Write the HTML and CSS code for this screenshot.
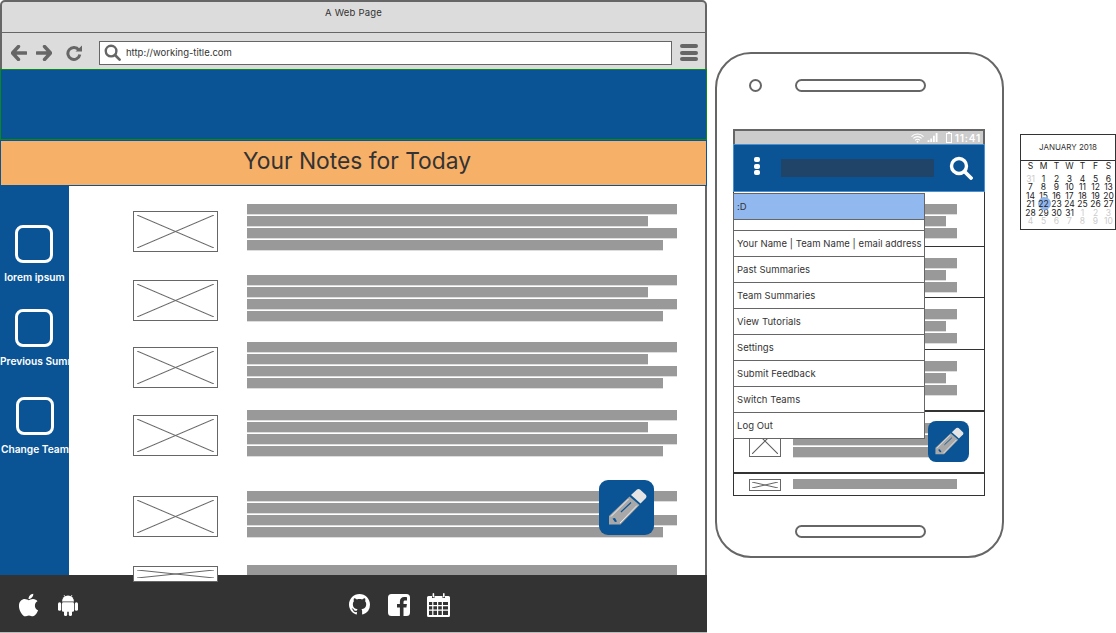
FILE: index.html
```html
<!DOCTYPE html>
<html lang="en">
<head>
    <meta charset="UTF-8">
    <meta name="viewport" content="width=device-width, initial-scale=1.0">
    <title>A Web Page</title>
    <link rel="stylesheet" href="styles.css">
</head>
<body>
    <svg class="defs" width="0" height="0">
        <symbol id="pencil" viewBox="0 0 55 55">
            <path d="M32 15 L38 9.5 Q39.5 8.5 41 9.5 L47 15 Q48 16.5 47 18 L41.5 23.5 Z" fill="#e4e4e4"/>
            <path d="M30.5 16.5 L40.5 25 L21.5 44.5 L10 44.5 L10 36 Z" fill="#a8a8a8"/>
            <path d="M29.5 19 L12 36.5 M38 25.5 L21 43" stroke="#eee" stroke-width="1" fill="none"/>
            <path d="M22 32 L32 22.5" stroke="#0a5495" stroke-width="1.2"/>
            <path d="M13.5 38.5 L16 38 L18 41.5 L16 42 Z" fill="#0a5495"/>
        </symbol>
        <symbol id="lens" viewBox="0 0 24 24">
            <circle cx="10" cy="10" r="7.5" fill="none" stroke="currentColor" stroke-width="3.4"/>
            <path d="M15.5 15.5 L22 22" stroke="currentColor" stroke-width="3.8" stroke-linecap="round"/>
        </symbol>
    </svg>

    <div class="browser">
        <div class="title-bar">A Web Page</div>
        <div class="toolbar">
            <svg class="nav-icon" viewBox="0 0 16 16"><path d="M7.5 1.5 L1.5 8 L7.5 14.5 M2 8 H15" fill="none" stroke="#666" stroke-width="3.4" stroke-linejoin="round" stroke-linecap="round"/></svg>
            <svg class="nav-icon" viewBox="0 0 16 16"><path d="M8.5 1.5 L14.5 8 L8.5 14.5 M14 8 H1" fill="none" stroke="#666" stroke-width="3.4" stroke-linejoin="round" stroke-linecap="round"/></svg>
            <svg class="nav-icon reload" viewBox="0 0 16 16"><path d="M12.8 5 A6 6 0 1 0 13.8 9.5" fill="none" stroke="#666" stroke-width="3"/><path d="M9.5 6.5 H16 V0.5 Z" fill="#666"/></svg>
            <div class="address">
                <svg class="address-lens"><use href="#lens"/></svg>
                <span>http://working-title.com</span>
            </div>
            <div class="burger"><i></i><i></i><i></i></div>
        </div>
        <div class="app-header"></div>
        <h1 class="page-title">Your Notes for Today</h1>
        <div class="page-body">
            <nav class="sidebar">
                <div class="side-item"><div class="side-icon"></div><span>lorem ipsum</span></div>
                <div class="side-item"><div class="side-icon"></div><span>Previous Summaries</span></div>
                <div class="side-item"><div class="side-icon"></div><span>Change Team</span></div>
            </nav>
            <main class="notes">
                <div class="note">
                    <div class="placeholder"></div>
                    <div class="lines"><div class="line"></div><div class="line w2"></div><div class="line"></div><div class="line w4"></div></div>
                </div>
                <div class="note">
                    <div class="placeholder"></div>
                    <div class="lines"><div class="line"></div><div class="line w2"></div><div class="line"></div><div class="line w4"></div></div>
                </div>
                <div class="note">
                    <div class="placeholder"></div>
                    <div class="lines"><div class="line"></div><div class="line w2"></div><div class="line"></div><div class="line w4"></div></div>
                </div>
                <div class="note">
                    <div class="placeholder"></div>
                    <div class="lines"><div class="line"></div><div class="line w2"></div><div class="line"></div><div class="line w4"></div></div>
                </div>
                <div class="note">
                    <div class="placeholder"></div>
                    <div class="lines"><div class="line"></div><div class="line w2"></div><div class="line"></div><div class="line w4"></div></div>
                </div>
                <div class="note">
                    <div class="placeholder squashed"></div>
                    <div class="lines"><div class="line"></div></div>
                </div>
                <button class="fab"><svg><use href="#pencil"/></svg></button>
            </main>
        </div>
        <footer class="page-footer">
            <svg class="foot-icon apple" viewBox="0 0 384 512"><path d="M318.7 268.7c-.2-36.7 16.4-64.4 50-84.8-18.8-26.9-47.2-41.7-84.7-44.6-35.5-2.8-74.3 20.7-88.5 20.7-15 0-49.4-19.7-76.4-19.7C63.3 141.2 4 184.8 4 273.5q0 39.3 14.4 81.2c12.8 36.7 59 126.7 107.2 125.2 25.2-.6 43-17.9 75.8-17.9 31.8 0 48.3 17.9 76.4 17.9 48.6-.7 90.4-82.5 102.6-119.3-65.2-30.7-61.7-90-61.7-91.9zm-56.6-164.2c27.3-32.4 24.8-61.9 24-72.5-24.1 1.4-52 16.4-67.9 34.9-17.5 19.8-27.8 44.3-25.6 71.9 26.1 2 49.9-11.4 69.5-34.3z"/></svg>
            <svg class="foot-icon android" viewBox="0 0 20 22">
                <path d="M4 7.5 A6 6 0 0 1 16 7.5 Z"/>
                <path d="M6 1 L7.5 3.5 M14 1 L12.5 3.5" stroke="#fff" stroke-width=".8"/>
                <rect x="4" y="8.3" width="12" height="9.5" rx="1.2"/>
                <rect x="0" y="8.3" width="3.2" height="8.5" rx="1.6"/>
                <rect x="16.8" y="8.3" width="3.2" height="8.5" rx="1.6"/>
                <rect x="6" y="16" width="3.2" height="6" rx="1.6"/>
                <rect x="10.8" y="16" width="3.2" height="6" rx="1.6"/>
            </svg>
            <svg class="foot-icon github" viewBox="0 0 16 16"><path d="M8 0C3.58 0 0 3.58 0 8c0 3.54 2.29 6.53 5.47 7.59.4.07.55-.17.55-.38 0-.19-.01-.82-.01-1.49-2.01.37-2.53-.49-2.69-.94-.09-.23-.48-.94-.82-1.13-.28-.15-.68-.52-.01-.53.63-.01 1.08.58 1.23.82.72 1.21 1.87.87 2.33.66.07-.52.28-.87.51-1.07-1.78-.2-3.64-.89-3.64-3.95 0-.87.31-1.59.82-2.15-.08-.2-.36-1.02.08-2.12 0 0 .67-.21 2.2.82.64-.18 1.32-.27 2-.27.68 0 1.36.09 2 .27 1.53-1.04 2.2-.82 2.2-.82.44 1.1.16 1.92.08 2.12.51.56.82 1.27.82 2.15 0 3.07-1.87 3.75-3.65 3.95.29.25.54.73.54 1.48 0 1.07-.01 1.93-.01 2.2 0 .21.15.46.55.38A8.013 8.013 0 0016 8c0-4.42-3.58-8-8-8z"/></svg>
            <svg class="foot-icon facebook" viewBox="0 0 22 22"><path d="M3.5 0 H18.5 A3.5 3.5 0 0 1 22 3.5 V18.5 A3.5 3.5 0 0 1 18.5 22 H15.5 V13.5 H18.4 L18.9 10 H15.5 V8 C15.5 7 16 6.4 17.2 6.4 H19 V3.3 C18.3 3.2 17.3 3.1 16.3 3.1 C13.6 3.1 11.9 4.8 11.9 7.6 V10 H9 V13.5 H11.9 V22 H3.5 A3.5 3.5 0 0 1 0 18.5 V3.5 A3.5 3.5 0 0 1 3.5 0 Z"/></svg>
            <svg class="foot-icon planner" viewBox="0 0 23 24">
                <path fill-rule="evenodd" d="M1.5 3 H5 V5 H7.5 V3 H15.5 V5 H18 V3 H21.5 A1.5 1.5 0 0 1 23 4.5 V22.5 A1.5 1.5 0 0 1 21.5 24 H1.5 A1.5 1.5 0 0 1 0 22.5 V4.5 A1.5 1.5 0 0 1 1.5 3 Z M2 9 V12 H5.2 V9 Z M6.4 9 V12 H10 V9 Z M11.2 9 V12 H14.8 V9 Z M16 9 V12 H21 V9 Z M2 13.2 V16.6 H5.2 V13.2 Z M6.4 13.2 V16.6 H10 V13.2 Z M11.2 13.2 V16.6 H14.8 V13.2 Z M16 13.2 V16.6 H21 V13.2 Z M2 17.8 V22 H5.2 V17.8 Z M6.4 17.8 V22 H10 V17.8 Z M11.2 17.8 V22 H14.8 V17.8 Z M16 17.8 V22 H21 V17.8 Z"/>
                <rect x="5.6" y="0" width="1.6" height="4.4" rx=".8"/>
                <rect x="16" y="0" width="1.6" height="4.4" rx=".8"/>
            </svg>
        </footer>
    </div>

    <div class="phone">
        <div class="phone-top">
            <div class="camera"></div>
            <div class="speaker"></div>
        </div>
        <div class="screen">
            <div class="status-bar">
                <svg class="wifi" viewBox="0 0 14 10"><path d="M0.5 3.5 A9 9 0 0 1 13.5 3.5 M2.5 5.5 A6.2 6.2 0 0 1 11.5 5.5 M4.5 7.5 A3.4 3.4 0 0 1 9.5 7.5" fill="none" stroke="#fff" stroke-width="1.2"/><circle cx="7" cy="9" r="1" fill="#fff"/></svg>
                <svg class="signal" viewBox="0 0 12 10"><path d="M0 8 h2 v2 h-2 Z M3 6 h2 v4 h-2 Z M6 3 h2 v7 h-2 Z M9 0 h2 v10 h-2 Z" fill="#fff"/></svg>
                <svg class="battery" viewBox="0 0 6 11"><path d="M2 0 h2 v1 h2 v10 h-6 v-10 h2 Z M1 2 v8 h4 v-8 Z" fill="#fff"/></svg>
                <span>11:41</span>
            </div>
            <div class="app-bar">
                <div class="dots"><i></i><i></i><i></i></div>
                <div class="search-box"></div>
                <svg class="app-lens"><use href="#lens"/></svg>
            </div>
            <div class="list">
                <div class="list-row"><div class="placeholder"></div><div class="lines"><div class="line"></div><div class="line short"></div><div class="line"></div></div></div>
                <div class="list-row"><div class="placeholder"></div><div class="lines"><div class="line"></div><div class="line short"></div><div class="line"></div></div></div>
                <div class="list-row"><div class="placeholder"></div><div class="lines"><div class="line"></div><div class="line short"></div><div class="line"></div></div></div>
                <div class="list-row"><div class="placeholder"></div><div class="lines"><div class="line"></div><div class="line short"></div><div class="line"></div></div></div>
                <div class="list-row"><div class="placeholder"></div><div class="lines"><div class="line"></div><div class="line short"></div><div class="line"></div></div></div>
                <div class="list-row"><div class="placeholder"></div><div class="lines"><div class="line"></div></div></div>
            </div>
            <ul class="menu">
                <li class="menu-head">:D</li>
                <li class="menu-gap"></li>
                <li>Your Name | Team Name | email address</li>
                <li>Past Summaries</li>
                <li>Team Summaries</li>
                <li>View Tutorials</li>
                <li>Settings</li>
                <li>Submit Feedback</li>
                <li>Switch Teams</li>
                <li>Log Out</li>
            </ul>
            <button class="fab small"><svg><use href="#pencil"/></svg></button>
        </div>
        <div class="speaker bottom"></div>
    </div>

    <div class="calendar">
        <div class="cal-title">JANUARY 2018</div>
        <div class="cal-grid">
            <b>S</b><b>M</b><b>T</b><b>W</b><b>T</b><b>F</b><b>S</b>
            <span class="off">31</span><span>1</span><span>2</span><span>3</span><span>4</span><span>5</span><span>6</span>
            <span>7</span><span>8</span><span>9</span><span>10</span><span>11</span><span>12</span><span>13</span>
            <span>14</span><span>15</span><span>16</span><span>17</span><span>18</span><span>19</span><span>20</span>
            <span>21</span><span class="today">22</span><span>23</span><span>24</span><span>25</span><span>26</span><span>27</span>
            <span>28</span><span>29</span><span>30</span><span>31</span><span class="off">1</span><span class="off">2</span><span class="off">3</span>
            <span class="off">4</span><span class="off">5</span><span class="off">6</span><span class="off">7</span><span class="off">8</span><span class="off">9</span><span class="off">10</span>
        </div>
    </div>
</body>
</html>
```

FILE: styles.css
```css
body {
    margin: 0;
    width: 1116px;
    height: 633px;
    overflow: hidden;
    display: flex;
    align-items: flex-start;
    background: #fff;
    color: #333;
    font-family: "Inter", "Liberation Sans", sans-serif;
}

.defs {
    position: absolute;
}

/* browser window */
.browser {
    width: 707px;
    height: 633px;
    flex: none;
    display: flex;
    flex-direction: column;
}

.title-bar {
    height: 30px;
    background: #dcdcdc;
    border: 2px solid #666;
    border-bottom: 1px solid #666;
    border-radius: 5px 5px 0 0;
    text-align: center;
    font-size: 9.5px;
    line-height: 22px;
    letter-spacing: 0.2px;
}

.toolbar {
    height: 33px;
    padding: 3px 0 0 9px;
    background: #dcdcdc;
    border: solid #666;
    border-width: 0 2px;
    display: flex;
    align-items: center;
}

.nav-icon {
    width: 16px;
    height: 16px;
    margin-right: 9px;
}

.nav-icon.reload {
    margin-left: 5px;
    margin-right: 17px;
}

.address {
    width: 571px;
    height: 22px;
    border: 1px solid #666;
    background: #fff;
    display: flex;
    align-items: center;
    font-size: 9.5px;
}

.address-lens {
    width: 17px;
    height: 17px;
    margin: 0 5px 0 4px;
    color: #666;
}

.burger {
    margin-left: 8px;
    display: flex;
    flex-direction: column;
    gap: 2.5px;
}

.burger i {
    display: block;
    width: 18px;
    height: 4px;
    border-radius: 2px;
    background: #666;
}

.app-header {
    height: 69px;
    background: #0a5495;
    border: 1px solid #0b8a1c;
}

.page-title {
    margin: 0;
    height: 44px;
    padding-left: 7px;
    background: #f7b068;
    border: 1px solid #0a5495;
    text-align: center;
    font-size: 22.8px;
    font-weight: 400;
    line-height: 40px;
    color: #333;
}

.page-body {
    flex: 1;
    min-height: 0;
    display: flex;
}

.sidebar {
    width: 69px;
    flex: none;
    background: #0a5495;
    overflow: hidden;
    padding-top: 39px;
    box-sizing: border-box;
    color: #fff;
    font-size: 10.2px;
    font-weight: 600;
}

.side-item {
    height: 84px;
    white-space: nowrap;
}

.side-item:last-child {
    margin-top: 4px;
}

.side-item span {
    display: block;
    margin-top: 8px;
    line-height: 12px;
    text-align: center;
}

.side-item:nth-child(2) span,
.side-item:nth-child(3) span {
    text-align: left;
}

.side-item:last-child span {
    margin-left: 1px;
}

.side-icon {
    width: 32px;
    height: 32px;
    margin-left: 15px;
    border: 3px solid #fff;
    border-radius: 8px;
}

.side-item:last-child .side-icon {
    margin-left: 16px;
}

.notes {
    flex: 1;
    position: relative;
    background: #fff;
    border-right: 2px solid #666;
    padding: 18px 0 0 64px;
}

.note {
    display: flex;
}

.note:nth-child(1) {
    margin-bottom: 23px;
}

.note:nth-child(2) {
    margin-bottom: 20px;
}

.note:nth-child(3) {
    margin-bottom: 21px;
}

.note:nth-child(4) {
    margin-bottom: 34px;
}

.note:nth-child(5) {
    margin-bottom: 27px;
}

.placeholder {
    width: 77px;
    height: 33px;
    padding: 3px;
    margin-top: 5px;
    flex: none;
    border: 1px solid #666;
    background-color: #fff;
    background-image:
        linear-gradient(to top right, transparent calc(50% - 1px), #666 50%, transparent calc(50% + 1px)),
        linear-gradient(to bottom right, transparent calc(50% - 1px), #666 50%, transparent calc(50% + 1px));
    background-origin: content-box;
    background-repeat: no-repeat;
}

.note:first-child .placeholder {
    margin-top: 7px;
}

.placeholder.squashed {
    height: 8px;
    margin-top: 1px;
    position: relative;
    z-index: 2;
}

.lines {
    margin-left: 29px;
    width: 430px;
    display: flex;
    flex-direction: column;
    gap: 1px;
}

.line {
    height: 10px;
    background: #999;
    border-bottom: 1px solid #ddd;
}

.line.w2 {
    width: 401px;
}

.line.w4 {
    width: 416px;
}

.note:last-of-type .line {
    border-bottom: 0;
}

.fab {
    position: absolute;
    right: 51px;
    top: 294px;
    width: 55px;
    height: 55px;
    padding: 0;
    border: 0;
    border-radius: 9px;
    background: #0a5495;
}

.fab svg {
    display: block;
    width: 100%;
    height: 100%;
}

.page-footer {
    height: 58px;
    padding-top: 2px;
    box-sizing: border-box;
    flex: none;
    background: #333;
    border-bottom: 1px solid #bbb;
    display: flex;
    align-items: center;
    position: relative;
}

.foot-icon {
    fill: #fff;
    flex: none;
}

.apple {
    width: 21px;
    height: 26px;
    margin-left: 18px;
}

.android {
    width: 20px;
    height: 22px;
    margin-left: 19px;
}

.github {
    width: 21px;
    height: 21px;
    margin-left: 271px;
}

.facebook {
    width: 22px;
    height: 22px;
    margin-left: 18px;
}

.planner {
    width: 23px;
    height: 24px;
    margin-left: 17px;
}

/* phone */
.phone {
    width: 285px;
    height: 502px;
    flex: none;
    margin: 52px 0 0 8px;
    border: 2px solid #666;
    border-radius: 36px;
    background: #fff;
}

.phone-top {
    display: flex;
    align-items: center;
    padding: 25px 0 0 32px;
}

.camera {
    width: 9px;
    height: 9px;
    border: 2px solid #666;
    border-radius: 50%;
}

.speaker {
    width: 127px;
    height: 9px;
    margin-left: 33px;
    border: 2px solid #666;
    border-radius: 7px;
}

.speaker.bottom {
    margin: 29px 0 0 78px;
}

.screen {
    width: 252px;
    margin: 37px 0 0 16px;
    position: relative;
    border-top: 2px solid #666;
}

.status-bar {
    height: 13px;
    background: #ccc;
    border: solid #666;
    border-width: 0 2px;
    display: flex;
    align-items: center;
    justify-content: flex-end;
    gap: 3px;
    padding-right: 2px;
    color: #fff;
    font-size: 10px;
    font-weight: 600;
    letter-spacing: 0.8px;
}

.wifi {
    width: 13px;
    height: 10px;
}

.signal {
    width: 12px;
    height: 9px;
    margin-right: 4px;
}

.battery {
    width: 6px;
    height: 11px;
}

.app-bar {
    height: 46px;
    background: #0a5495;
    border: 1px solid #4a8fd0;
    display: flex;
    align-items: center;
}

.dots {
    margin-left: 20px;
    display: flex;
    flex-direction: column;
    gap: 1.5px;
    margin-top: -4px;
}

.dots i {
    display: block;
    width: 6px;
    height: 5px;
    border-radius: 2px;
    background: #fff;
}

.search-box {
    width: 153px;
    height: 18px;
    margin-left: 21px;
    background: #1f4468;
}

.app-lens {
    width: 24px;
    height: 24px;
    margin-left: 15px;
    color: #fff;
}

.list {
    width: 250px;
    border: 1px solid #333;
    border-top: 0;
}

.list-row {
    height: 54px;
    display: flex;
    border-bottom: 1px solid #333;
    padding: 11px 0 0 15px;
    box-sizing: border-box;
}

.list-row:nth-child(1) {
    height: 55px;
    padding-top: 12px;
}

.list-row:nth-child(2) {
    height: 51px;
}

.list-row:nth-child(3) {
    height: 52px;
}

.list-row:nth-child(4),
.list-row:nth-child(5) {
    height: 62px;
    border-bottom-width: 2px;
}

.list-row:nth-child(6) {
    height: 21px;
    padding-top: 5px;
    border-bottom: 0;
}

.list-row .placeholder {
    width: 32px;
    height: 32px;
    padding: 2px;
    margin-top: 2px;
    box-sizing: border-box;
}

.list-row:nth-child(6) .placeholder {
    height: 12px;
    margin-top: 0;
}

.list-row .lines {
    width: 164px;
    margin-left: 12px;
}

.list-row .line.short {
    width: 153px;
}

.list-row:last-child .line {
    border-bottom: 0;
}

.menu {
    position: absolute;
    left: 0;
    top: 62px;
    width: 190px;
    margin: 0;
    padding: 0;
    list-style: none;
    background: #fff;
    border: 1px solid #666;
    border-bottom: 0;
    font-size: 9.5px;
    letter-spacing: 0.05px;
}

.menu li {
    height: 25px;
    padding-left: 3px;
    border-bottom: 1px solid #666;
    line-height: 25px;
    white-space: nowrap;
}

.menu .menu-head {
    background: #91b9f0;
}

.menu .menu-gap {
    height: 10px;
}

.fab.small {
    right: 16px;
    top: 290px;
    width: 41px;
    height: 41px;
    border-radius: 8px;
}

/* calendar */
.calendar {
    width: 94px;
    height: 94px;
    flex: none;
    margin: 134px 0 0 16px;
    border: 1px solid #333;
    font-size: 8.5px;
}

.cal-title {
    height: 25px;
    border-bottom: 1px solid #333;
    text-align: center;
    line-height: 24px;
    font-size: 8px;
}

.cal-grid {
    display: grid;
    grid-template-columns: repeat(7, 13px);
    grid-template-rows: 12.5px;
    grid-auto-rows: 8.6px;
    padding: 1px 0 0 3px;
    text-align: center;
    line-height: 9px;
    color: #222;
}

.cal-grid b {
    font-weight: 400;
}

.cal-grid .off {
    color: #ccc;
}

.cal-grid .today {
    position: relative;
    z-index: 0;
}

.cal-grid .today::before {
    content: "";
    position: absolute;
    z-index: -1;
    left: 1px;
    top: -3px;
    width: 13px;
    height: 13px;
    border-radius: 50%;
    background: #8eb4ea;
}
```
